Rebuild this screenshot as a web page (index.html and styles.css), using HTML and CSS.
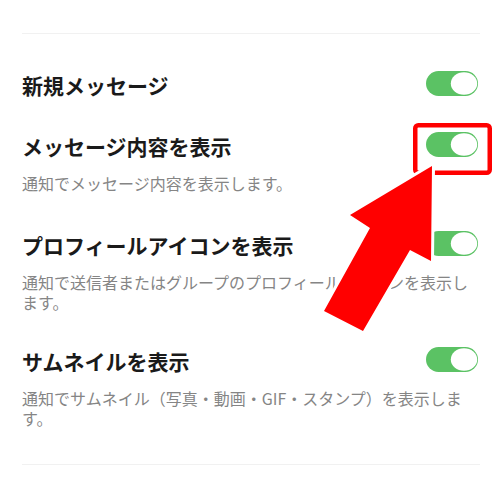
FILE: index.html
```html
<!DOCTYPE html>
<html lang="ja">
<head>
<meta charset="utf-8">
<title>通知設定</title>
<link rel="stylesheet" href="styles.css">
</head>
<body>
<main class="page">
  <section class="list">
    <div class="row row-single">
      <div class="head">
        <span class="title">新規メッセージ</span>
        <svg class="toggle" viewBox="0 0 52 25" width="52" height="25"><rect x="0" y="0" width="52" height="25" rx="12.5" fill="#5bc264"/><ellipse cx="38" cy="12.5" rx="13.2" ry="11.3" fill="#fff"/></svg>
      </div>
    </div>
    <div class="row row-wide">
      <div class="head">
        <span class="title">メッセージ内容を表示</span>
        <svg class="toggle" viewBox="0 0 52 25" width="52" height="25"><rect x="0" y="0" width="52" height="25" rx="12.5" fill="#5bc264"/><ellipse cx="38" cy="12.5" rx="13.2" ry="11.3" fill="#fff"/></svg>
      </div>
      <p class="desc">通知でメッセージ内容を表示します。</p>
    </div>
    <div class="row">
      <div class="head">
        <span class="title">プロフィールアイコンを表示</span>
        <svg class="toggle" viewBox="0 0 52 25" width="52" height="25"><rect x="0" y="0" width="52" height="25" rx="12.5" fill="#5bc264"/><ellipse cx="38" cy="12.5" rx="13.2" ry="11.3" fill="#fff"/></svg>
      </div>
      <p class="desc">通知で送信者またはグループのプロフィールアイコンを表示します。</p>
    </div>
    <div class="row">
      <div class="head">
        <span class="title">サムネイルを表示</span>
        <svg class="toggle" viewBox="0 0 52 25" width="52" height="25"><rect x="0" y="0" width="52" height="25" rx="12.5" fill="#5bc264"/><ellipse cx="38" cy="12.5" rx="13.2" ry="11.3" fill="#fff"/></svg>
      </div>
      <p class="desc">通知でサムネイル（写真・動画・GIF・スタンプ）を表示します。</p>
    </div>
  </section>
  <svg class="overlay" viewBox="0 0 500 480" width="500" height="480">
    <rect x="415.25" y="125.25" width="74.5" height="47.5" rx="3" fill="none" stroke="#ff0000" stroke-width="4.5"/>
    <polygon class="arrow" points="432,166 350,215 370,228 324,311 363,331 410,250 431,261"/>
  </svg>
</main>
</body>
</html>
```
FILE: styles.css
```css
html, body {
  margin: 0;
  padding: 0;
  background: #ffffff;
}

.page {
  position: relative;
  width: 500px;
  height: 480px;
  overflow: hidden;
  padding-top: 33px;
  box-sizing: border-box;
  font-family: "Noto Sans CJK JP", "Noto Sans", sans-serif;
}

.list {
  margin: 0 20px 0 22px;
  border-top: 1.5px solid #f1f1f1;
  border-bottom: 1.5px solid #f1f1f1;
  padding: 19px 0 19px;
}

.row {
  padding: 17px 0;
}

.row-single {
  padding-bottom: 14px;
}

.row-wide {
  padding-bottom: 20px;
}

.head {
  display: flex;
  justify-content: space-between;
  align-items: flex-start;
}

.title {
  font-size: 21px;
  line-height: 30px;
  font-weight: 700;
  color: #1a1a1a;
}

.toggle {
  display: block;
  margin-top: 1px;
  margin-right: 2px;
  flex: none;
}

.desc {
  margin: 12px 0 0 0;
  font-size: 16px;
  line-height: 20px;
  color: #858585;
}

.overlay {
  position: absolute;
  top: 0;
  left: 0;
  pointer-events: none;
}

.arrow {
  fill: #ff0000;
  stroke: #ffffff;
  stroke-width: 6;
  stroke-linejoin: miter;
  paint-order: stroke;
}
```
